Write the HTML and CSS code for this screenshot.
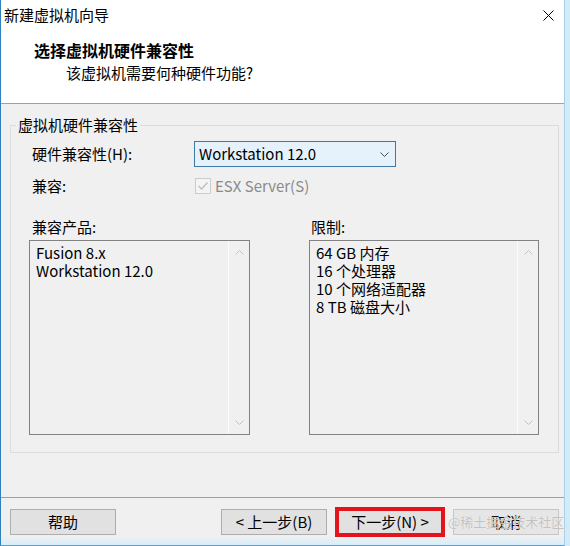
FILE: index.html
```html
<!DOCTYPE html>
<html lang="zh-CN">
<head>
<meta charset="utf-8">
<title>新建虚拟机向导</title>
<link rel="stylesheet" href="styles.css">
</head>
<body>
<div class="window">
  <div class="titlebar">
    <span class="title">新建虚拟机向导</span>
    <svg class="close" width="11" height="11" viewBox="0 0 11 11"><path d="M0.5 0.5 L10.5 10.5 M10.5 0.5 L0.5 10.5" stroke="#000" stroke-width="1" fill="none"/></svg>
  </div>
  <div class="header">
    <div class="heading">选择虚拟机硬件兼容性</div>
    <div class="subheading">该虚拟机需要何种硬件功能?</div>
  </div>
  <div class="content">
    <fieldset class="group">
      <legend class="group-title">虚拟机硬件兼容性</legend>
      <div class="row row-hw">
        <span class="label">硬件兼容性(H):</span>
        <div class="combo">
          <span class="combo-value">Workstation 12.0</span>
          <svg class="combo-arrow" width="9" height="5" viewBox="0 0 9 5"><path d="M0.5 0.5 L4.5 4.5 L8.5 0.5" stroke="#4a4a4a" stroke-width="1" fill="none"/></svg>
        </div>
      </div>
      <div class="row row-compat">
        <span class="label">兼容:</span>
        <span class="checkbox"><svg width="14" height="14" viewBox="0 0 14 14"><path d="M2.5 7 L5.5 10 L11.5 3.5" stroke="#bdbdbd" stroke-width="1.3" fill="none"/></svg></span>
        <span class="check-label">ESX Server(S)</span>
      </div>
      <div class="lists">
        <div class="col">
          <div class="list-title">兼容产品:</div>
          <div class="listbox">
            <div class="items">
              <div>Fusion 8.x</div>
              <div>Workstation 12.0</div>
            </div>
            <div class="scroll">
              <svg width="9" height="5" viewBox="0 0 9 5"><path d="M0.5 4.5 L4.5 0.5 L8.5 4.5" stroke="#c3c3c3" stroke-width="1" fill="none"/></svg>
              <svg width="9" height="5" viewBox="0 0 9 5"><path d="M0.5 0.5 L4.5 4.5 L8.5 0.5" stroke="#c3c3c3" stroke-width="1" fill="none"/></svg>
            </div>
          </div>
        </div>
        <div class="col col-right">
          <div class="list-title">限制:</div>
          <div class="listbox">
            <div class="items">
              <div>64 GB 内存</div>
              <div>16 个处理器</div>
              <div>10 个网络适配器</div>
              <div>8 TB 磁盘大小</div>
            </div>
            <div class="scroll">
              <svg width="9" height="5" viewBox="0 0 9 5"><path d="M0.5 4.5 L4.5 0.5 L8.5 4.5" stroke="#c3c3c3" stroke-width="1" fill="none"/></svg>
              <svg width="9" height="5" viewBox="0 0 9 5"><path d="M0.5 0.5 L4.5 4.5 L8.5 0.5" stroke="#c3c3c3" stroke-width="1" fill="none"/></svg>
            </div>
          </div>
        </div>
      </div>
    </fieldset>
  </div>
  <div class="footer">
    <button class="btn">帮助</button>
    <button class="btn btn-prev">&lt; 上一步(B)</button>
    <button class="btn btn-next">下一步(N) &gt;</button>
    <button class="btn btn-cancel">取消</button>
    <span class="watermark">@稀土掘金技术社区</span>
  </div>
</div>
</body>
</html>
```

FILE: styles.css
```css
* {
  box-sizing: border-box;
}

html, body {
  margin: 0;
  padding: 0;
}

body {
  width: 570px;
  height: 546px;
  background: linear-gradient(to right, #eef7fc, #d3ebf7);
  font-family: "Noto Sans CJK SC", "Noto Sans", sans-serif;
  font-size: 15px;
  color: #000;
  overflow: hidden;
}

.window {
  width: 565px;
  height: 546px;
  border-left: 1px solid #2f7fbd;
  border-right: 1px solid #a9d2ea;
  border-bottom: 1px solid #5d9fd0;
  background: #f0f0f0;
  display: flex;
  flex-direction: column;
}

.titlebar {
  height: 30px;
  flex: none;
  background: #fff;
  display: flex;
  align-items: center;
  justify-content: space-between;
  padding: 0 10px 0 3px;
}

.title {
  line-height: 20px;
}

.close {
  display: block;
}

.header {
  height: 74px;
  flex: none;
  background: #fff;
  border-bottom: 1px solid #a0a0a0;
  padding-top: 10px;
}

.heading {
  font-size: 16px;
  font-weight: bold;
  line-height: 20px;
  padding-left: 33px;
}

.subheading {
  line-height: 20px;
  margin-top: 3px;
  padding-left: 65px;
}

.content {
  height: 394px;
  flex: none;
  border-bottom: 1px solid #a0a0a0;
  padding-top: 11px;
  padding-left: 9px;
}

.group {
  width: 549px;
  height: 338px;
  margin: 0;
  padding: 0;
  min-width: 0;
  border: 1px solid #dcdcdc;
}

.group-title {
  margin-left: 5px;
  padding: 0 2px;
  line-height: 20px;
}

.row {
  display: flex;
  align-items: center;
  padding-left: 21px;
}

.label {
  width: 162px;
  flex: none;
  line-height: 20px;
}

.row-hw {
  margin-top: 6px;
  height: 26px;
}

.combo {
  width: 202px;
  height: 26px;
  border: 1px solid #3c7aa8;
  background: #e5f1fb;
  display: flex;
  align-items: center;
  justify-content: space-between;
  padding: 0 6px 0 4px;
}

.combo-value {
  line-height: 20px;
}

.combo-arrow {
  display: block;
}

.row-compat {
  margin-top: 9px;
  height: 20px;
}

.checkbox {
  width: 16px;
  height: 16px;
  margin-left: 1px;
  border: 1px solid #cccccc;
  background: #f4f4f4;
  display: flex;
  align-items: center;
  justify-content: center;
}

.checkbox svg {
  display: block;
}

.check-label {
  margin-left: 4px;
  color: #8a8a8a;
  line-height: 20px;
}

.lists {
  margin-top: 21px;
  padding-left: 18px;
  display: grid;
  grid-template-columns: 221px 230px;
  column-gap: 59px;
}

.list-title {
  line-height: 20px;
  padding-left: 3px;
}

.col-right .list-title {
  padding-left: 2px;
}

.listbox {
  margin-top: 3px;
  height: 195px;
  border: 1px solid #828282;
  background: #f0f0f0;
  display: flex;
}

.items {
  flex: 1;
  padding: 3px 0 0 6px;
  line-height: 18px;
}

.scroll {
  width: 21px;
  flex: none;
  border-left: 1px solid #fbfbfb;
  display: flex;
  flex-direction: column;
  justify-content: space-between;
  align-items: center;
  padding: 9px 0 9px 0;
}

.scroll svg {
  display: block;
}

.footer {
  flex: 1;
  position: relative;
  display: flex;
  align-items: flex-start;
  padding: 11px 5px 0 9px;
  background: linear-gradient(to bottom, #f0f0f0 0, #f0f0f0 38px, #d8eef9 100%);
}

.btn {
  width: 106px;
  height: 26px;
  border: 1px solid #adadad;
  background: #e1e1e1;
  font-family: inherit;
  font-size: 15px;
  color: #000;
  padding: 0;
  line-height: 20px;
}

.btn-prev {
  margin-left: auto;
}

.btn-next {
  margin-left: 10px;
  outline: 4px solid #e3141c;
  outline-offset: -2px;
}

.btn-cancel {
  margin-left: 10px;
  background: #e6e6e6;
  border-color: #c6c6c6;
}

.watermark {
  position: absolute;
  left: 447px;
  top: 16px;
  font-size: 13px;
  line-height: 16px;
  color: #c2c2c2;
  text-shadow: 0 0 1px #fff;
  white-space: nowrap;
  pointer-events: none;
}
```
